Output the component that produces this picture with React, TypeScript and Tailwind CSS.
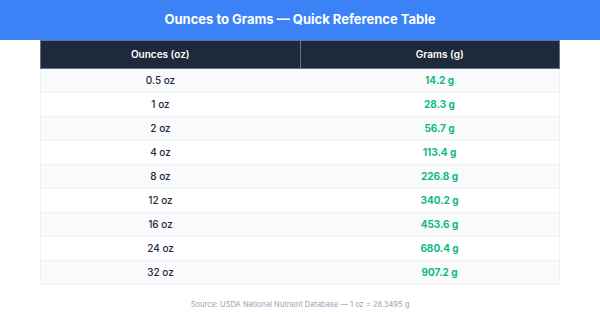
const rows = [
  { oz: "0.5 oz", g: "14.2 g" },
  { oz: "1 oz", g: "28.3 g" },
  { oz: "2 oz", g: "56.7 g" },
  { oz: "4 oz", g: "113.4 g" },
  { oz: "8 oz", g: "226.8 g" },
  { oz: "12 oz", g: "340.2 g" },
  { oz: "16 oz", g: "453.6 g" },
  { oz: "24 oz", g: "680.4 g" },
  { oz: "32 oz", g: "907.2 g" },
];

export default function App() {
  return (
    <div className="h-[314px] w-[600px] bg-white font-['Inter',sans-serif]">
      <div className="flex h-10 items-center justify-center bg-[#3b82f6]">
        <h1 className="text-[13px] font-bold text-white">
          Ounces to Grams — Quick Reference Table
        </h1>
      </div>
      <div className="px-10">
        <table className="w-full border-collapse border border-[#eef2f7] text-center">
          <thead>
            <tr className="h-7 bg-[#1e293b] text-[10px] text-white">
              <th className="w-1/2 border border-[#64748b] pr-5 font-semibold">
                Ounces (oz)
              </th>
              <th className="w-1/2 border border-[#64748b] pl-5 font-semibold">
                Grams (g)
              </th>
            </tr>
          </thead>
          <tbody>
            {rows.map((row, i) => (
              <tr
                key={row.oz}
                className={
                  i % 2 === 0
                    ? "h-6 border-b border-[#eef2f7] bg-[#f8fafc]"
                    : "h-6 border-b border-[#eef2f7] bg-white"
                }
              >
                <td className="pr-5 text-[10px] font-medium text-[#1e293b]">
                  {row.oz}
                </td>
                <td className="pl-5 text-[10px] font-bold text-[#10b981]">
                  {row.g}
                </td>
              </tr>
            ))}
          </tbody>
        </table>
      </div>
      <p className="mt-[14px] text-center text-[7.5px] text-[#94a3b8]">
        Source: USDA National Nutrient Database — 1 oz = 28.3495 g
      </p>
    </div>
  );
}
